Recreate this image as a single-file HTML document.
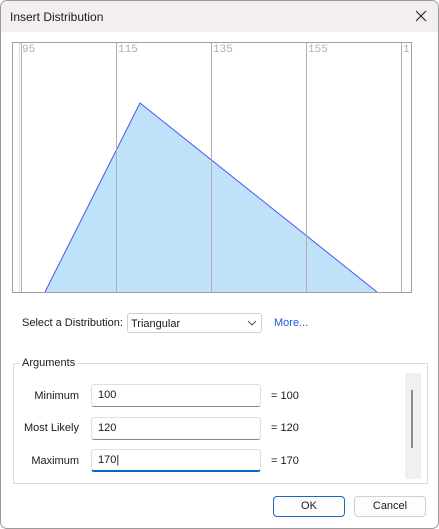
<!DOCTYPE html>
<html><head><style>
*{box-sizing:border-box;margin:0;padding:0}
body{width:439px;height:529px;background:#fff;font-family:"Liberation Sans",sans-serif;font-size:11px;color:#1a1a1a;position:relative;overflow:hidden}
.win{position:absolute;left:0;top:0;width:439px;height:529px;border:1px solid #9a9a9a;border-radius:7px;overflow:hidden;background:#fff}
.title{position:absolute;left:0;top:0;width:100%;height:31px;background:#f4efef}
.abs{position:absolute}
.inp{position:absolute;left:90px;width:170px;height:23px;border:1px solid #e0e0e0;border-bottom:1px solid #8a8a8a;border-radius:3px;padding:4px 6px;font-size:11px}
.lab{position:absolute;right:359px;font-size:11px}
.eq{position:absolute;left:270px}
.btn{position:absolute;top:495px;width:72px;height:21px;border:1px solid #d0d0d0;border-radius:4px;text-align:center;line-height:19px;background:#fdfdfd}
</style></head><body><div class="win">
<div class="title"></div>
<div class="abs" style="left:9px;top:9px;font-size:12px">Insert Distribution</div>
<svg class="abs" style="left:414px;top:9px" width="12" height="12"><path d="M1 1L11 11M11 1L1 11" stroke="#222" stroke-width="1.1"/></svg>
<svg class="abs" style="left:0;top:0" width="439" height="300">
<rect x="11.5" y="41.5" width="399" height="250" fill="#fff" stroke="#a0a0a0"/>
<line x1="18.5" y1="42" x2="18.5" y2="291" stroke="#ddd"/>
<polygon points="44,291 139,102 376,291" fill="#c0e2f8"/>
<polyline points="44,291 139,102 376,291" fill="none" stroke="#4a55f0" stroke-width="1"/>
<g stroke="#b0b0b0"><line x1="20.5" y1="42" x2="20.5" y2="291"/><line x1="115.5" y1="42" x2="115.5" y2="291"/><line x1="210.5" y1="42" x2="210.5" y2="291"/><line x1="305.5" y1="42" x2="305.5" y2="291"/><line x1="400.5" y1="42" x2="400.5" y2="291"/></g>
<line x1="12" y1="291.5" x2="410" y2="291.5" stroke="#a0a0a0"/>
<g font-family="Liberation Mono,monospace" font-size="11" fill="#b0b0b0"><text x="21" y="51">95</text><text x="117" y="51">115</text><text x="212" y="51">135</text><text x="307" y="51">155</text><text x="402" y="51">1</text></g>
</svg>
<div class="abs" style="left:21px;top:316px">Select a Distribution:</div>
<div class="abs" style="left:126px;top:312px;width:135px;height:20px;border:1px solid #d0d0d0;border-radius:3px;padding:4px 3px">Triangular</div>
<svg class="abs" style="left:246px;top:319px" width="10" height="6"><path d="M1 1L5 5L9 1" stroke="#555" fill="none"/></svg>
<div class="abs" style="left:273px;top:316px;color:#1a5ae0">More...</div>
<div class="abs" style="left:12px;top:362px;width:415px;height:121px;border:1px solid #dcdcdc"></div>
<div class="abs" style="left:19px;top:356px;background:#fff;padding:0 2px">Arguments</div>
<div class="abs" style="left:404px;top:372px;width:16px;height:106px;background:#f0f0f0"></div>
<div class="abs" style="left:410px;top:389px;width:2px;height:58px;background:#8a8a8a"></div>
<div class="lab" style="top:389px">Minimum</div><div class="inp" style="top:383px">100</div><div class="eq" style="top:389px">= 100</div>
<div class="lab" style="top:421px">Most Likely</div><div class="inp" style="top:416px">120</div><div class="eq" style="top:421px">= 120</div>
<div class="lab" style="top:454px">Maximum</div><div class="inp" style="top:448px;border-bottom:2px solid #0a64c0">170|</div><div class="eq" style="top:454px">= 170</div>
<div class="btn" style="left:272px;border-color:#1a68c0">OK</div>
<div class="btn" style="left:353px">Cancel</div>
</div></body></html>
